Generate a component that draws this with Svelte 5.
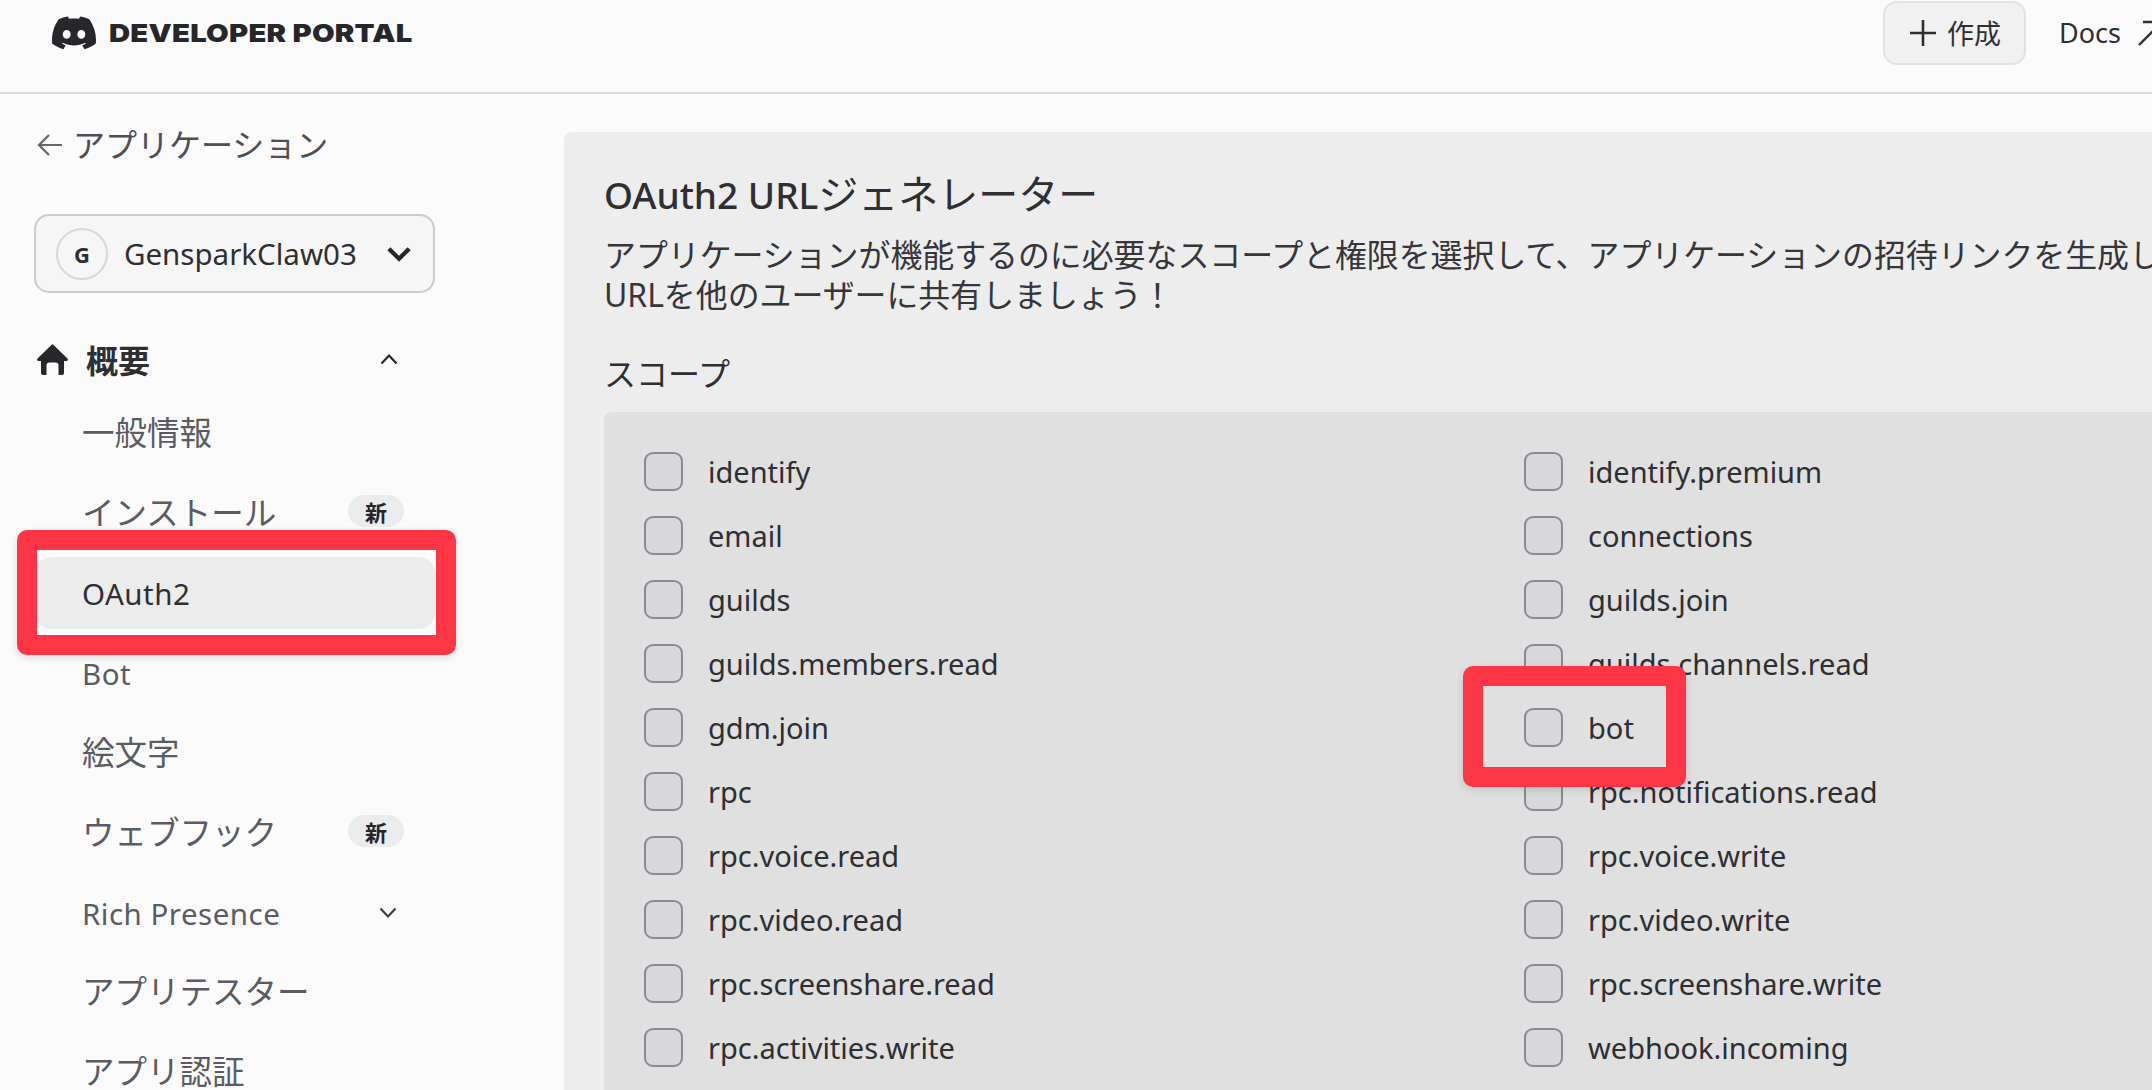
<script>
  const left = ['identify','email','guilds','guilds.members.read','gdm.join','rpc','rpc.voice.read','rpc.video.read','rpc.screenshare.read','rpc.activities.write'];
  const right = ['identify.premium','connections','guilds.join','guilds.channels.read','bot','rpc.notifications.read','rpc.voice.write','rpc.video.write','rpc.screenshare.write','webhook.incoming'];
  const scopes = left.flatMap((l, i) => [l, right[i]]);
  const nav = [
    { label: '一般情報' },
    { label: 'インストール', badge: true },
    { label: 'OAuth2', active: true },
    { label: 'Bot' },
    { label: '絵文字' },
    { label: 'ウェブフック', badge: true },
    { label: 'Rich Presence', chevron: true },
    { label: 'アプリテスター' },
    { label: 'アプリ認証' }
  ];
</script>

<div class="page">
  <header class="top">
    <div class="brand">
      <svg class="logo" viewBox="0 2.6 24 19" preserveAspectRatio="none" aria-hidden="true"><path d="M20.317 4.3698a19.7913 19.7913 0 00-4.8851-1.5152.0741.0741 0 00-.0785.0371c-.211.3753-.4447.8648-.6083 1.2495-1.8447-.2762-3.68-.2762-5.4868 0-.1636-.3933-.4058-.8742-.6177-1.2495a.077.077 0 00-.0785-.037 19.7363 19.7363 0 00-4.8852 1.515.0699.0699 0 00-.0321.0277C.5334 9.0458-.319 13.5799.0992 18.0578a.0824.0824 0 00.0312.0561c2.0528 1.5076 4.0413 2.4228 5.9929 3.0294a.0777.0777 0 00.0842-.0276c.4616-.6304.8731-1.2952 1.226-1.9942a.076.076 0 00-.0416-.1057c-.6528-.2476-1.2743-.5495-1.8722-.8923a.077.077 0 01-.0076-.1277c.1258-.0943.2517-.1923.3718-.2914a.0743.0743 0 01.0776-.0105c3.9278 1.7933 8.18 1.7933 12.0614 0a.0739.0739 0 01.0785.0095c.1202.099.246.1981.3728.2924a.077.077 0 01-.0066.1276 12.2986 12.2986 0 01-1.873.8914.0766.0766 0 00-.0407.1067c.3604.698.7719 1.3628 1.225 1.9932a.076.076 0 00.0842.0286c1.961-.6067 3.9495-1.5219 6.0023-3.0294a.077.077 0 00.0313-.0552c.5004-5.177-.8382-9.6739-3.5485-13.6604a.061.061 0 00-.0312-.0286zM8.02 15.3312c-1.1825 0-2.1569-1.0857-2.1569-2.419 0-1.3332.9555-2.4189 2.157-2.4189 1.2108 0 2.1757 1.0952 2.1568 2.419 0 1.3332-.9555 2.4189-2.1569 2.4189zm7.9748 0c-1.1825 0-2.1569-1.0857-2.1569-2.419 0-1.3332.9554-2.4189 2.1569-2.4189 1.2108 0 2.1757 1.0952 2.1568 2.419 0 1.3332-.946 2.4189-2.1568 2.4189Z"/></svg>
      <span class="wordmark">DEVELOPER PORTAL</span>
    </div>
    <div class="actions">
      <button class="create">
        <svg class="plus" viewBox="0 0 28 28" aria-hidden="true"><path d="M14 1v26M1 14h26"/></svg>
        <span class="create-label">作成</span>
      </button>
      <span class="docs">Docs</span>
      <svg class="ext" viewBox="0 0 28 28" aria-hidden="true"><path d="M2 26 24 4M6 3h19v19"/></svg>
    </div>
  </header>

  <div class="body">
    <aside class="side">
      <div class="back">
        <svg class="arrow" viewBox="0 0 26 24" aria-hidden="true"><path d="M25 12H2M12 2 2 12l10 10"/></svg>
        <span>アプリケーション</span>
      </div>
      <div class="select">
        <span class="avatar">G</span>
        <span class="appname">GensparkClaw03</span>
        <svg class="select-chev" viewBox="0 0 24 15" aria-hidden="true"><path d="M2.500 2.500 12 12l9.500-9.500"/></svg>
      </div>
      <div class="section">
        <svg class="home" viewBox="0 0 31 32" aria-hidden="true"><path d="M15.500 1 30.500 15.500c.8.9.2 2.500-1 2.500H27v11.500a2.500 2.500 0 0 1-2.500 2.500H21.500V22.500a3 3 0 0 0-3-3h-6a3 3 0 0 0-3 3V32H6.500A2.500 2.500 0 0 1 4 29.500V18H1.500c-1.200 0-1.800-1.600-1-2.500Z"/></svg>
        <span class="section-title">概要</span>
        <svg class="chev up" viewBox="0 0 18 12" aria-hidden="true"><path d="M1.500 10.500 9 2.500l7.500 8"/></svg>
      </div>
      <nav class="nav">
        {#each nav as item}
          <div class="item" class:active={item.active}>
            <span class:latin={!/[^\x00-\x7f]/.test(item.label)}>{item.label}</span>
            {#if item.badge}<span class="badge">新</span>{/if}
            {#if item.chevron}
              <svg class="chev" viewBox="0 0 18 12" aria-hidden="true"><path d="M1.500 1.500 9 9.500l7.500-8"/></svg>
            {/if}
          </div>
        {/each}
      </nav>
    </aside>

    <main class="panel">
      <h1><span class="h1-latin">OAuth2 URL</span>ジェネレーター</h1>
      <p class="desc">アプリケーションが機能するのに必要なスコープと権限を選択して、アプリケーションの招待リンクを生成します。<br />URLを他のユーザーに共有しましょう！</p>
      <h2>スコープ</h2>
      <div class="scopes">
        {#each scopes as s}
          <label class="scope">
            <span class="box"></span>
            <span class="name">{s}</span>
          </label>
        {/each}
      </div>
    </main>
  </div>

  <div class="mark mark-oauth"></div>
  <div class="mark mark-bot"></div>
</div>

<style>
  :global(body) { margin: 0; background: #fbfbfb; }
  .page {
    position: relative;
    width: 2152px;
    height: 1090px;
    overflow: hidden;
    background: #fbfbfb;
    color: #2e2e33;
    font-family: "Noto Sans", "Noto Sans CJK JP", sans-serif;
  }
  .top {
    height: 94px;
    box-sizing: border-box;
    border-bottom: 2px solid #dcdcdc;
    display: flex;
    justify-content: space-between;
    align-items: flex-start;
    padding-left: 52px;
  }
  .brand { display: flex; align-items: center; gap: 13px; height: 66px; }
  .logo { width: 44px; height: 34px; fill: #26262b; }
  .wordmark {
    font-family: "Inter", sans-serif;
    font-weight: 900;
    font-size: 25px;
    letter-spacing: 0.2px;
    color: #26262b;
    white-space: nowrap;
    transform: scaleX(1.17);
    transform-origin: left center;
  }
  .actions { display: flex; align-items: center; margin-top: 1px; height: 64px; flex: none; width: 269px; }
  .create {
    width: 143px;
    height: 64px;
    flex: none;
    box-sizing: border-box;
    border: 2px solid #e2e2e2;
    border-radius: 14px;
    background: #f1f1f1;
    display: flex;
    align-items: center;
    padding: 0 0 0 24px;
    gap: 10px;
    color: #2e2e33;
    font: inherit;
    font-size: 27px;
  }
  .create-label { margin-bottom: 2px; }
  .plus { width: 28px; height: 28px; flex: none; fill: none; stroke: #2e2e33; stroke-width: 2.600; }
  .docs { margin-left: 33px; margin-bottom: 2px; font-size: 27px; flex: none; }
  .ext { width: 28px; height: 28px; margin-left: 16px; flex: none; fill: none; stroke: #2e2e33; stroke-width: 2.400; }

  .body { display: flex; height: 996px; }
  .side { width: 564px; flex: none; box-sizing: border-box; padding-left: 34px; }
  .back {
    display: flex;
    align-items: center;
    gap: 10px;
    height: 44px;
    margin-top: 27px;
    padding-left: 3px;
    font-size: 32px;
    color: #4e4e57;
  }
  .arrow { width: 26px; height: 24px; margin-top: 3px; fill: none; stroke: #66666f; stroke-width: 2.200; flex: none; }
  .select {
    width: 401px;
    height: 79px;
    box-sizing: border-box;
    margin-top: 49px;
    border: 2px solid #cbcbcb;
    border-radius: 15px;
    background: #f6f6f6;
    display: flex;
    align-items: center;
    padding-left: 20px;
  }
  .avatar {
    width: 52px;
    height: 52px;
    box-sizing: border-box;
    border: 2px solid #d8d8d8;
    border-radius: 50%;
    display: flex;
    align-items: center;
    justify-content: center;
    font-size: 22px;
    font-weight: 700;
    flex: none;
  }
  .appname { width: 262px; flex: none; margin-left: 16px; font-size: 29.500px; white-space: nowrap; }
  .select-chev { width: 26px; height: 16px; flex: none; fill: none; stroke: #26262b; stroke-width: 4; }
  .section { display: flex; align-items: center; height: 44px; margin-top: 44px; padding-left: 3px; }
  .home { width: 31px; height: 32px; fill: #26262b; flex: none; }
  .section-title { margin-left: 18px; font-size: 32px; font-weight: 700; }
  .chev { width: 18px; height: 12px; fill: none; stroke: #3c3c44; stroke-width: 2.200; position: absolute; left: 345px; top: 30px; }
  .section .chev { position: static; margin-left: 230px; stroke: #26262b; }
  .nav { display: flex; flex-direction: column; margin-top: 14px; width: 402px; }
  .item {
    position: relative;
    height: 72px;
    margin-top: 8px;
    box-sizing: border-box;
    padding-left: 48px;
    display: flex;
    align-items: center;
    border-radius: 18px;
    font-size: 32.500px;
    color: #5b5b64;
    white-space: nowrap;
  }
  .item:nth-child(1) { margin-top: 0; }
  .item:nth-child(2) { margin-top: 8px; }
  .item:nth-child(3) { margin-top: 10px; }
  .item:nth-child(4) { margin-top: 8px; }
  .item:nth-child(5) { margin-top: 6px; }
  .item:nth-child(7) { margin-top: 10px; }
  .item:nth-child(8) { margin-top: 5px; }
  .latin { font-size: 29.500px; letter-spacing: 0.5px; }
  .item.active { background: #ececec; color: #2e2e33; }
  .badge {
    position: absolute;
    left: 314px;
    top: 20px;
    width: 56px;
    height: 32px;
    border-radius: 16px;
    background: #ececec;
    color: #26262b;
    font-size: 22px;
    font-weight: 700;
    display: flex;
    align-items: center;
    justify-content: center;
  }

  .panel {
    flex: none;
    width: 1700px;
    margin-top: 38px;
    height: 1100px;
    box-sizing: border-box;
    background: #ededed;
    border-radius: 8px 0 0 0;
    padding: 34px 0 0 40px;
  }
  h1 { margin: 0; font-size: 40px; line-height: 56px; font-weight: 400; color: #2e2e33; white-space: nowrap; }
  .h1-latin { font-size: 37px; font-weight: 500; }
  .desc { margin: 12px 0 0; font-size: 31.900px; line-height: 40px; color: #35353b; white-space: nowrap; }
  h2 { margin: 37px 0 0; font-size: 32px; line-height: 44px; font-weight: 400; color: #2e2e33; }
  .scopes {
    margin-top: 16px;
    margin-right: -40px;
    background: #e0e0e0;
    border-radius: 8px 0 0 0;
    padding: 27px 0 0 40px;
    display: grid;
    grid-template-columns: 880px 1fr;
    grid-auto-rows: 64px;
    height: 800px;
  }
  .scope { display: flex; align-items: center; height: 64px; }
  .box {
    width: 39px;
    height: 39px;
    margin-top: 1px;
    box-sizing: border-box;
    border: 2px solid #8a8a92;
    border-radius: 9px;
    background: #d8d8dc;
    flex: none;
  }
  .name { margin-left: 25px; font-size: 29px; color: #2e2e33; white-space: nowrap; }

  .mark {
    position: absolute;
    box-sizing: border-box;
    border-style: solid;
    border-color: #fc3644;
    border-radius: 10px;
    box-shadow: 0 3px 8px rgba(0, 0, 0, 0.12);
  }
  .mark-oauth { left: 17px; top: 530px; width: 439px; height: 125px; border-width: 20px; }
  .mark-bot { left: 1463px; top: 666px; width: 223px; height: 121px; border-width: 20px; }
</style>
